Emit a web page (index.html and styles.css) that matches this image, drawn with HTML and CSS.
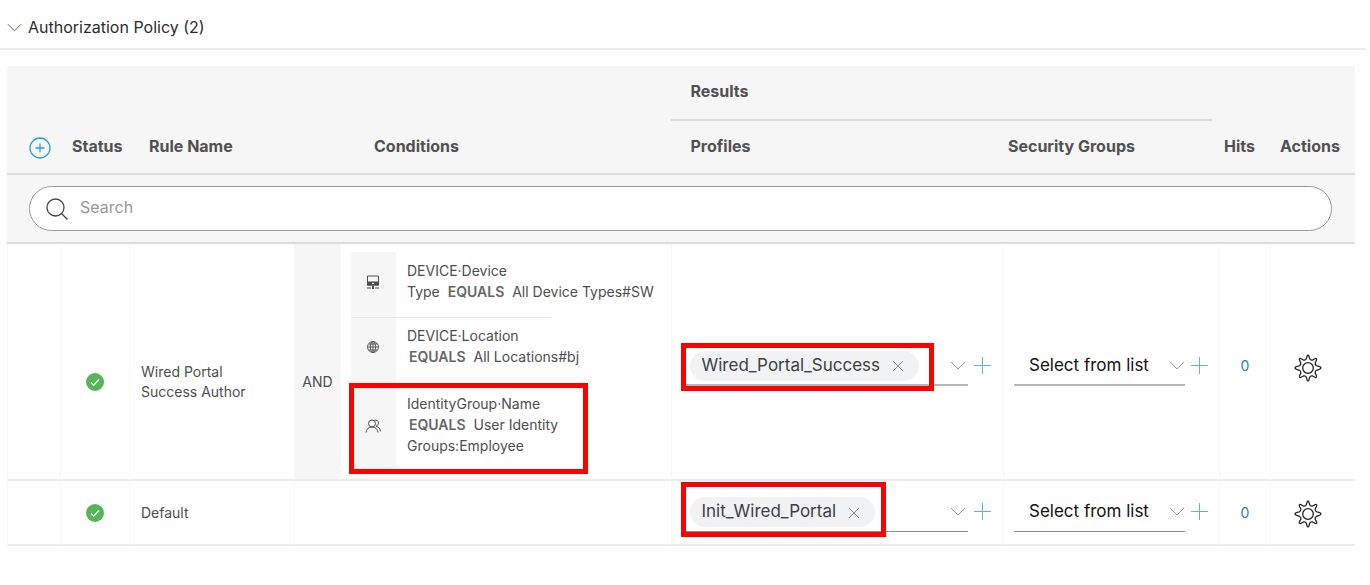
FILE: index.html
```html
<!DOCTYPE html>
<html lang="en">
<head>
<meta charset="utf-8">
<title>Authorization Policy</title>
<link rel="stylesheet" href="styles.css">
</head>
<body>
<svg class="sprite" aria-hidden="true">
  <symbol id="chevron" viewBox="0 0 16 10"><path d="M1 1l7 7 7-7" fill="none" stroke="currentColor"/></symbol>
  <symbol id="plus" viewBox="0 0 17 17"><path d="M8.5 0v17M0 8.5h17" fill="none" stroke="currentColor"/></symbol>
  <symbol id="close" viewBox="0 0 12 12"><path d="M1 1l10 10M11 1L1 11" fill="none" stroke="currentColor"/></symbol>
  <symbol id="check" viewBox="0 0 18 18"><circle cx="9" cy="9" r="9" fill="#55b558"/><path d="M5 9.500l2.700 2.600L13 6.500" fill="none" stroke="#fff" stroke-width="1.300"/></symbol>
  <symbol id="gear" viewBox="0 0 28 28"><g fill="none" stroke="currentColor" stroke-width="1.300" stroke-linejoin="round"><circle cx="14" cy="14" r="5.300"/><path d="M12.300 4.800C12.900 3.800 12.800 1 14 1s1.100 2.800 1.700 3.800c.5 1 1.800 1.500 3 1.200 1.200-.4 2.800-2.200 3.800-1.300 1 1-.9 2.800-1.200 4-.3 1.100.2 2.400 1.200 3 1 .6 4.500.8 4.500 2.300s-3.500 1.700-4.500 2.300c-1 .6-1.500 1.900-1.200 3 .3 1.200 2.200 3 1.200 4-1 .9-2.600-.9-3.800-1.300-1.200-.3-2.500.2-3 1.200-.6 1-.5 3.800-1.700 3.800s-1.100-2.800-1.700-3.800c-.5-1-1.800-1.500-3-1.200-1.200.4-2.800 2.200-3.800 1.300-1-1 .9-2.800 1.200-4 .3-1.100-.2-2.400-1.200-3-1-.6-4.500-.8-4.500-2.300s3.500-1.700 4.500-2.300c1-.6 1.500-1.900 1.200-3-.3-1.200-2.200-3-1.200-4 1-.9 2.600.9 3.800 1.300 1.200.3 2.500-.2 3-1.200z"/></g></symbol>
</svg>

<h1 class="section-title">
  <button class="section-toggle" type="button" aria-expanded="true"><svg class="icon-toggle"><use href="#chevron"/></svg>Authorization Policy (2)</button>
</h1>

<table class="policy">
  <colgroup>
    <col class="c-add"><col class="c-status"><col class="c-rule"><col class="c-join"><col><col><col class="c-groups"><col class="c-hits"><col class="c-actions">
  </colgroup>
  <thead>
    <tr class="head-top">
      <th colspan="5"></th>
      <th colspan="2" class="results" scope="colgroup"><div class="results-label">Results</div></th>
      <th colspan="2"></th>
    </tr>
    <tr class="head-main">
      <th class="h-add"><button class="icon-button add-rule" type="button" aria-label="Add rule"><svg viewBox="0 0 22 22"><g fill="none" stroke="currentColor" stroke-width="1.300"><circle cx="11" cy="11" r="10"/><path d="M11 6.500v9M6.500 11h9"/></g></svg></button></th>
      <th class="h-status" scope="col">Status</th>
      <th class="h-rule" scope="col">Rule Name</th>
      <th class="h-conditions" colspan="2" scope="col">Conditions</th>
      <th class="h-profiles" scope="col">Profiles</th>
      <th class="h-tight" scope="col">Security Groups</th>
      <th class="h-tight" scope="col">Hits</th>
      <th class="h-actions" scope="col">Actions</th>
    </tr>
    <tr class="head-search">
      <td colspan="9">
        <label class="search">
          <svg class="icon-search" viewBox="0 0 22 22"><g fill="none" stroke="currentColor" stroke-width="1.300"><circle cx="9.500" cy="9.500" r="8.500"/><path d="M15.500 15.500l6 6"/></g></svg>
          <input type="search" placeholder="Search" aria-label="Search">
        </label>
      </td>
    </tr>
  </thead>
  <tbody>
    <tr class="rule rule-tall">
      <td></td>
      <td class="status"><svg class="icon-check" role="img" aria-label="Enabled"><use href="#check"/></svg></td>
      <td class="name">Wired Portal Success Author</td>
      <td class="join">AND</td>
      <td class="conditions">
        <ul class="condition-list">
          <li class="condition">
            <span class="condition-icon"><svg viewBox="0 0 14 14"><path d="M1.500 1h11v9h-11z" fill="none" stroke="currentColor"/><path d="M1 6.500h12v4H1zM6 11h2v3H6zM1 12.500h4v1H1zM9 12.500h4v1H9z" fill="currentColor"/><path d="M6 8.500h2" stroke="#fff"/></svg></span>
            <p>DEVICE·Device<br>Type <b class="operator">EQUALS</b> All Device Types#SW</p>
          </li>
          <li class="condition divided">
            <span class="condition-icon"><svg viewBox="0 0 14 14"><g fill="none" stroke="currentColor" stroke-width=".9"><circle cx="7" cy="7" r="5.500"/><ellipse cx="7" cy="7" rx="2.700" ry="5.500"/><path d="M7 1.500v11M1.500 7h11M2.500 4h9M2.500 10h9"/></g></svg></span>
            <p>DEVICE·Location<br><b class="operator leading">EQUALS</b> All Locations#bj</p>
          </li>
          <li class="condition marked">
            <span class="condition-icon"><svg class="people" viewBox="0 0 16 14"><g fill="none" stroke="currentColor"><circle cx="7" cy="4.500" r="3.500"/><path d="M1 13.500c.5-3.500 2.500-5.500 6-5.500s5.500 2 6 5.500M9.500 1.300c2-.9 4 .4 4 2.500 0 1.800-1 2.800-2.500 3.400 2.700.8 4.200 2.300 4.500 5"/></g></svg></span>
            <p>IdentityGroup·Name<br><b class="operator leading">EQUALS</b> User Identity<br>Groups:Employee</p>
          </li>
        </ul>
      </td>
      <td class="profiles">
        <div class="field">
          <div class="combo">
            <span class="chip marked">Wired_Portal_Success<button class="icon-button chip-remove" type="button" aria-label="Remove Wired_Portal_Success"><svg><use href="#close"/></svg></button></span>
            <button class="icon-button combo-open" type="button" aria-label="Open profile list"><svg><use href="#chevron"/></svg></button>
          </div>
          <button class="icon-button add" type="button" aria-label="Add profile"><svg><use href="#plus"/></svg></button>
        </div>
      </td>
      <td class="groups">
        <div class="field">
          <div class="combo">
            <select aria-label="Security group"><option>Select from list</option></select>
            <svg class="select-arrow"><use href="#chevron"/></svg>
          </div>
          <button class="icon-button add" type="button" aria-label="Add security group"><svg><use href="#plus"/></svg></button>
        </div>
      </td>
      <td class="hits"><a href="#hits">0</a></td>
      <td class="actions"><button class="icon-button gear" type="button" aria-label="Actions"><svg><use href="#gear"/></svg></button></td>
    </tr>
    <tr class="rule rule-default">
      <td></td>
      <td class="status"><svg class="icon-check" role="img" aria-label="Enabled"><use href="#check"/></svg></td>
      <td class="name">Default</td>
      <td colspan="2"></td>
      <td class="profiles">
        <div class="field">
          <div class="combo">
            <span class="chip marked">Init_Wired_Portal<button class="icon-button chip-remove" type="button" aria-label="Remove Init_Wired_Portal"><svg><use href="#close"/></svg></button></span>
            <button class="icon-button combo-open" type="button" aria-label="Open profile list"><svg><use href="#chevron"/></svg></button>
          </div>
          <button class="icon-button add" type="button" aria-label="Add profile"><svg><use href="#plus"/></svg></button>
        </div>
      </td>
      <td class="groups">
        <div class="field">
          <div class="combo">
            <select aria-label="Security group"><option>Select from list</option></select>
            <svg class="select-arrow"><use href="#chevron"/></svg>
          </div>
          <button class="icon-button add" type="button" aria-label="Add security group"><svg><use href="#plus"/></svg></button>
        </div>
      </td>
      <td class="hits"><a href="#hits">0</a></td>
      <td class="actions"><button class="icon-button gear" type="button" aria-label="Actions"><svg><use href="#gear"/></svg></button></td>
    </tr>
  </tbody>
</table>
</body>
</html>
```
FILE: styles.css
```css
* { box-sizing: border-box; }

body {
  margin: 0;
  background: #fff;
  color: #4d4d4d;
  font-family: Inter, "Liberation Sans", sans-serif;
  font-size: 14px;
}

svg { display: block; }
.sprite { display: none; }

button, input, select { font: inherit; color: inherit; }

.icon-button {
  display: inline-flex;
  padding: 0;
  border: 0;
  background: none;
  cursor: pointer;
}

/* Section heading */
.section-title {
  margin: 0 4px 16px 0;
  padding: 17px 7px 10px;
  border-bottom: 2px solid #ececec;
  font-size: 16px;
  font-weight: 400;
  line-height: 21px;
}
.section-toggle {
  display: flex;
  align-items: center;
  gap: 6px;
  padding: 0;
  border: 0;
  background: none;
  color: #2b2b2b;
}
.icon-toggle { width: 15px; height: 10px; color: #555; }

/* Table */
.policy {
  width: calc(100% - 22px);
  margin: 0 15px 0 7px;
  table-layout: fixed;
  border-collapse: separate;
  border-spacing: 0;
}
.c-add { width: 53px; }
.c-status { width: 69px; }
.c-rule { width: 165px; }
.c-join { width: 46px; }
.c-groups { width: 216px; }
.c-hits { width: 51px; }
.c-actions { width: 85px; }

th, td { padding: 0; text-align: left; }

thead { background: #f6f6f6; }
th { font-size: 16px; font-weight: 700; line-height: 20px; color: #505050; }

.results-label {
  margin-right: 7px;
  padding: 15px 19px 18px;
  border-bottom: 2px solid #dcdcdc;
}
.head-main th {
  padding-top: 15px;
  padding-bottom: 17px;
  border-bottom: 2px solid #dcdcdc;
  white-space: nowrap;
}
.head-main .h-add { padding: 5px 0 0 22px; }
.h-status { padding-left: 12px; }
.h-rule { padding-left: 20px; }
.h-conditions { padding-left: 80px; }
.h-profiles { padding-left: 19px; }
.h-tight { padding-left: 5px; }
.h-actions { padding-left: 10px; }

.add-rule { color: #2b9fd9; }
.add-rule svg { width: 22px; height: 22px; }

.head-search td { padding: 11px 23px 11px 22px; border-bottom: 2px solid #dcdcdc; }
.search {
  display: flex;
  align-items: center;
  gap: 12px;
  height: 45px;
  padding: 0 16px;
  border: 1px solid #999;
  border-radius: 23px;
  background: #fff;
}
.icon-search { width: 22px; height: 22px; color: #444; }
.search input {
  flex: 1;
  padding: 0 0 4px;
  border: 0;
  outline: 0;
  background: none;
  font-size: 16px;
  appearance: none;
}
.search input::placeholder { color: #979797; opacity: 1; }

.rule td { border-bottom: 2px solid #ececec; border-left: 1px solid #f8f8f8; }

.status { text-align: center; }
.icon-check { width: 18px; height: 18px; margin: 0 auto; }
.rule .name { padding-left: 11px; padding-right: 40px; line-height: 20px; }
.join { background: #f6f6f6; text-align: center; }
.rule-tall .status, .rule-tall .name, .rule-tall .join { padding-top: 40px; }

/* Conditions */
.conditions { vertical-align: top; }
.condition-list {
  margin: 0;
  padding: 8px 0 5px 10px;
  list-style: none;
}
.condition { position: relative; display: flex; min-height: 65px; }
.condition p { margin: 0; padding: 8px 0 0 11px; line-height: 21px; }
.condition-icon {
  flex: none;
  display: flex;
  align-items: center;
  justify-content: center;
  width: 45px;
  padding: 0 2px 5px 0;
  background: #f6f6f6;
}
.condition-icon svg { width: 14px; height: 14px; }
.condition-icon .people { width: 16px; }
.condition.divided::before {
  content: "";
  position: absolute;
  top: 0;
  left: 0;
  width: 200px;
  border-top: 1px solid #e6e6e6;
}
.condition.marked { width: 234px; min-height: 92px; }
.condition.marked p { padding-top: 11px; }
.operator { margin: 0 4px; font-weight: 600; color: #666; }
.operator.leading { margin-left: 2px; }

/* Highlight frame */
.marked { position: relative; }
.marked::after {
  content: "";
  position: absolute;
  border: 5px solid #fe0000;
  pointer-events: none;
}
.condition.marked::after { inset: 1px -3px 0 -2px; }
.rule-tall .chip::after { inset: -8px -15px -10px -9px; }
.rule-default .chip::after { inset: -15px -11px -10px -9px; }

/* Fields */
.field { display: flex; align-items: center; gap: 6px; }
.rule .profiles { padding: 0 12px 0 9px; }
.rule .groups { padding: 0 11px 0 10px; }
.rule-tall .profiles, .rule-tall .groups { padding-top: 7px; }
.rule-default .profiles, .rule-default .groups { padding-bottom: 3px; }
.combo {
  position: relative;
  flex: 1;
  display: flex;
  align-items: center;
  height: 42px;
  padding-top: 3px;
  border-bottom: 1px solid #8c8c8c;
}
.rule-tall .combo { border-bottom: 2px solid #b8b8b8; }
.profiles .combo { padding-left: 9px; }
.chip {
  display: flex;
  align-items: center;
  gap: 12px;
  height: 30px;
  padding: 0 15px 2px 11px;
  border-radius: 15px;
  background: #f1f2f4;
  color: #3c3e44;
  font-size: 17px;
}
.chip-remove { padding-top: 3px; color: #888; }
.chip-remove svg { width: 12px; height: 12px; }
.combo-open { margin-left: auto; padding-right: 2px; color: #999; }
.combo-open svg, .select-arrow { width: 16px; height: 10px; }
.combo select {
  width: 100%;
  height: 38px;
  padding: 0 20px 2px 15px;
  border: 0;
  background: none;
  color: #111;
  font-size: 17px;
  appearance: none;
}
.select-arrow { position: absolute; right: 0; color: #999; pointer-events: none; }
.add { color: #5fb0e3; }
.add svg { width: 17px; height: 17px; }

.rule-default td { height: 65px; }
.hits { text-align: center; }
.hits a { color: #1b84c4; text-decoration: none; }
.rule-tall .hits { padding-top: 8px; }
.rule .actions { padding-left: 23px; }
.rule-tall .actions { padding-top: 12px; }
.rule-default .actions { padding-top: 3px; }
.gear { vertical-align: middle; color: #222; }
.gear svg { width: 28px; height: 28px; }
```
